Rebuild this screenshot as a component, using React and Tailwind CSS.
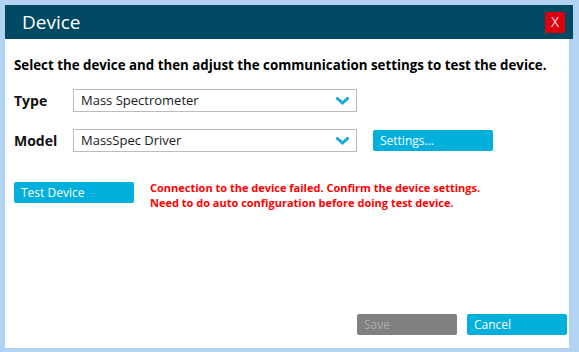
const font = { fontFamily: '"Open Sans", "Noto Sans", sans-serif' }

function Chevron() {
  return (
    <svg width="13" height="8" viewBox="0 0 13 8" className="flex-shrink-0">
      <path d="M1.5 1.5 L6.5 6 L11.5 1.5" fill="none" stroke="#1ba9dd" strokeWidth="3" strokeLinecap="square" />
    </svg>
  )
}

function Select({ value }) {
  return (
    <div className="w-[284px] h-[23px] border border-[#bcbcbc] bg-white flex items-center justify-between pl-[7px] pr-[7px]">
      <span className="text-[13px] text-[#1a1a1a] leading-none">{value}</span>
      <Chevron />
    </div>
  )
}

function Btn({ children, className = '' }) {
  return (
    <button className={'h-[21px] rounded-[2px] text-left pl-[7px] text-[12px] leading-none ' + className}>
      {children}
    </button>
  )
}

export default function App() {
  return (
    <div style={font} className="w-[579px] h-[352px] bg-[#b3d3f5] pt-[5px] pl-[5px] pr-[6px] pb-[4px] flex flex-col">
      {/* Заголовок */}
      <div className="h-[34px] bg-[#004963] flex items-center justify-between pl-[17px] pr-[8px]">
        <span className="text-white text-[19px] leading-none">Device</span>
        <button className="w-[20px] h-[21px] bg-[#dc000f] rounded-[2px] text-[#ffd5dc] text-[14px] leading-none flex items-center justify-center">X</button>
      </div>

      {/* Тело */}
      <div className="flex-1 bg-white mr-[4px] flex flex-col pl-[9px] pr-[2px] pt-[20px] pb-[13px]">
        <div className="text-[13.3px] font-bold text-black leading-none whitespace-nowrap">
          Select the device and then adjust the communication settings to test the device.
        </div>

        <div className="flex items-center mt-[17px]">
          <span className="w-[59px] text-[14px] font-bold text-[#111] leading-none">Type</span>
          <Select value="Mass Spectrometer" />
        </div>

        <div className="flex items-center mt-[17px]">
          <span className="w-[59px] text-[14px] font-bold text-[#111] leading-none">Model</span>
          <Select value="MassSpec Driver" />
          <Btn className="w-[120px] ml-[16px] bg-[#00b0dc] text-white">Settings...</Btn>
        </div>

        <div className="flex items-start mt-[28px]">
          <Btn className="w-[120px] mt-[2px] bg-[#00b0dc] text-white">Test Device</Btn>
          <div className="ml-[16px] text-[11px] font-bold text-[#ff0000] leading-[15px] whitespace-nowrap">
            <div>Connection to the device failed. Confirm the device settings.</div>
            <div>Need to do auto configuration before doing test device.</div>
          </div>
        </div>

        <div className="flex-1" />

        <div className="flex justify-end gap-[10px]">
          <Btn className="w-[100px] bg-[#808080] text-[#ababab]">Save</Btn>
          <Btn className="w-[100px] bg-[#00b0dc] text-white">Cancel</Btn>
        </div>
      </div>
    </div>
  )
}
